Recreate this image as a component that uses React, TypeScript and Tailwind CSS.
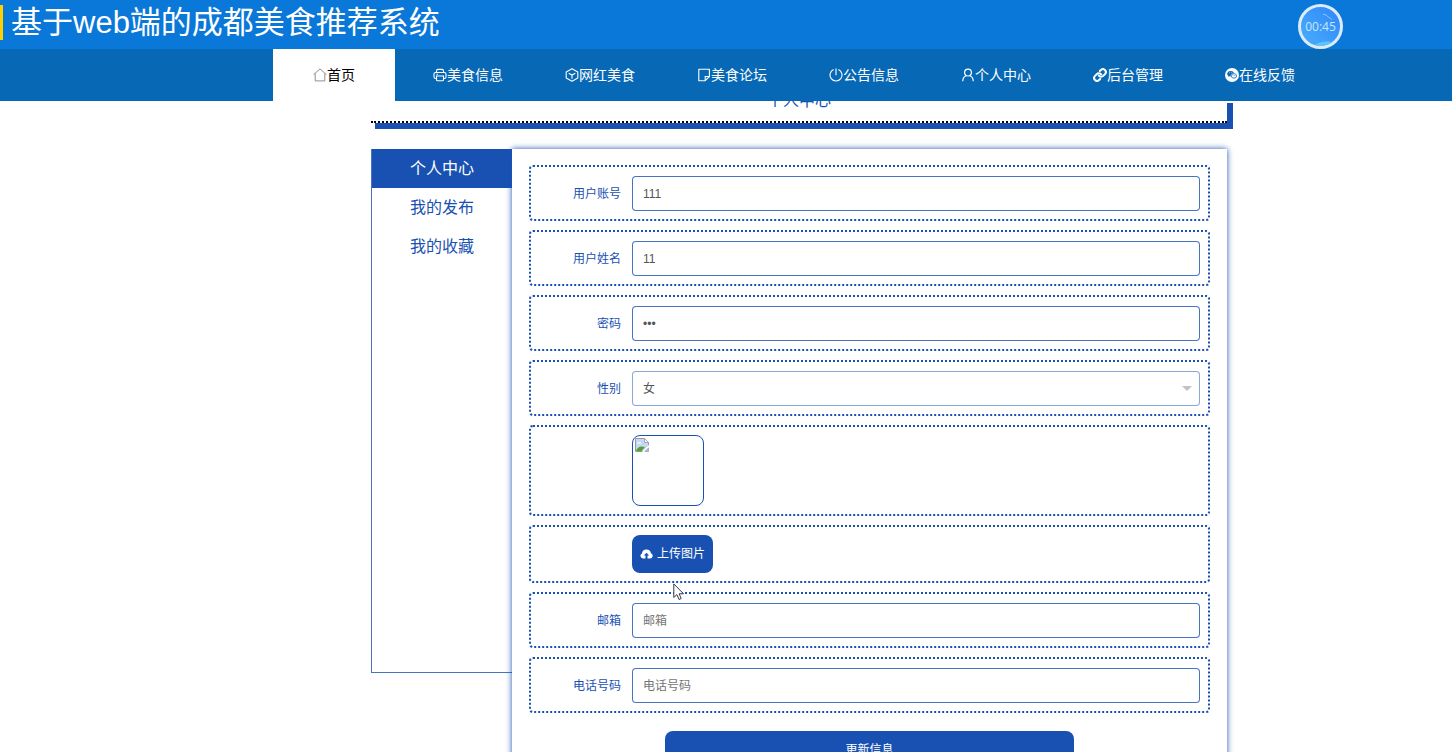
import type { ReactNode } from 'react';
import { Link } from 'lucide-react';

type NavItem = { label: string; icon: ReactNode };

const stroke = {
  viewBox: '0 0 14 14',
  fill: 'none',
  stroke: 'currentColor',
  strokeWidth: 1.1,
  className: 'w-3.5 h-3.5 shrink-0',
} as const;

const HomeIcon = () => (
  <svg {...stroke} strokeWidth={0.8}>
    <path d="M0.6 6.6 7 0.9l6.4 5.7M2.2 5.6v7.3h9.6V5.6" />
  </svg>
);

const PrinterIcon = () => (
  <svg {...stroke}>
    <path d="M3.5 4.5V3a1.6 1.6 0 0 1 1.6-1.6h3.8A1.6 1.6 0 0 1 10.5 3v1.5M3.5 10.5h-.9A1.6 1.6 0 0 1 1 8.900V6.100a1.600 1.600 0 0 1 1.600-1.600h8.800A1.600 1.600 0 0 1 13 6.100v2.800a1.600 1.600 0 0 1-1.600 1.600h-.9" />
    <path d="M3.500 8h7v3.700a1 1 0 0 1-1 1h-5a1 1 0 0 1-1-1zM3.500 6.300h1.500" />
  </svg>
);

const CubeIcon = () => (
  <svg {...stroke}>
    <path d="M7 .8 12.800 3.900v6.200L7 13.200 1.200 10.100V3.900z" strokeLinejoin="round" />
    <path d="M3.700 5.200 7 7.100l3.300-1.900M7 7.100v3.700" />
  </svg>
);

const NoteIcon = () => (
  <svg {...stroke}>
    <path d="M12.400 8.500V1.300H1.800v11.400h6.400z" strokeLinejoin="round" />
    <path d="M8.200 12.700V8.500h4.200" />
  </svg>
);

const PowerIcon = () => (
  <svg {...stroke}>
    <path d="M4.600 1.500a6 6 0 1 0 4.800 0M7 .5v6.800" />
  </svg>
);

const UserIcon = () => (
  <svg {...stroke} strokeWidth={1.200}>
    <circle cx="7" cy="4.600" r="3.400" />
    <path d="M1.700 13.200c.2-3.200 1.700-5 3.700-5.700M12.300 13.200c-.2-3.200-1.700-5-3.700-5.700" />
  </svg>
);

const WechatIcon = () => (
  <svg viewBox="0 0 14 14" className="w-3.5 h-3.5 shrink-0">
    <circle cx="7" cy="7" r="7" fill="currentColor" />
    <path
      d="M5.700 2.900c-2 0-3.500 1.200-3.500 2.800 0 .9.500 1.700 1.300 2.200l-.3 1.100 1.300-.7 1.100.2c-.3-1.900 1.300-3.300 3.400-3.300-.3-1.400-1.700-2.300-3.300-2.300z"
      fill="#0768b5"
    />
    <ellipse cx="8.900" cy="7.900" rx="2.700" ry="2.200" fill="none" stroke="#0768b5" strokeWidth=".8" />
    <path d="M4.300 4.800h.8M6.400 4.800h.8" stroke="#fff" strokeWidth=".8" />
    <path d="M7.700 7.500h.7M9.500 7.500h.7" stroke="#0768b5" strokeWidth=".7" />
  </svg>
);

const UploadIcon = () => (
  <svg viewBox="0 0 13 10" className="w-[13px] h-2.5">
    <path
      d="M3 9.500A2.700 2.700 0 0 1 1.900 4.400 4.600 4.600 0 0 1 11 4.300a2.700 2.700 0 0 1-1 5.200H7.500V6.600h1.600L6.500 3.800 3.900 6.600h1.600v2.900z"
      fill="currentColor"
    />
  </svg>
);

const navItems: NavItem[] = [
  { label: '美食信息', icon: <PrinterIcon /> },
  { label: '网红美食', icon: <CubeIcon /> },
  { label: '美食论坛', icon: <NoteIcon /> },
  { label: '公告信息', icon: <PowerIcon /> },
  { label: '个人中心', icon: <UserIcon /> },
  { label: '后台管理', icon: <Link className="w-3.5 h-3.5 shrink-0" strokeWidth={3.5} /> },
  { label: '在线反馈', icon: <WechatIcon /> },
];

const sideItems = ['个人中心', '我的发布', '我的收藏'];

const inputClass =
  'w-full h-[35px] px-2.5 rounded border border-[#1951b2]/80 bg-white text-xs text-[#555] placeholder:text-[#757575] outline-none';

export default function App() {
  return (
    <div className="relative h-screen overflow-hidden bg-white font-['Liberation_Sans','Noto_Sans_CJK_SC',sans-serif]">
      <Header />
      <main className="pl-[371px] pr-[225px]">
        <div className="-mt-0.5 h-6 flex justify-center border-b-2 border-dotted border-black bg-white shadow-[5px_5px_0_1px_#1951b2]">
          <h2 className="-mt-1.5 text-base leading-4 text-[#1951b2]">个人中心</h2>
        </div>
        <div className="mt-[26px] flex items-start">
          <SideMenu />
          <ProfileForm />
        </div>
      </main>
      <RecordTimer />
    </div>
  );
}

function Header() {
  return (
    <header className="relative z-10 text-white">
      <div className="h-[49px] pt-[5px] bg-[#0a78d8]">
        <h1 className="h-[35px] pl-2 border-l-3 border-[#fdd000] text-[31px] leading-[35px]">
          基于web端的成都美食推荐系统
        </h1>
      </div>
      <nav className="h-[52px] pl-[273px] flex items-center bg-[#0768b5] text-sm whitespace-nowrap">
        <a href="#home" className="h-full px-10 flex items-center bg-white text-black">
          <span className="text-gray-500">
            <HomeIcon />
          </span>
          首页
        </a>
        <div className="ml-[38px] flex items-center gap-[62px]">
          {navItems.map((item) => (
            <a key={item.label} href="#nav" className="flex items-center">
              {item.icon}
              {item.label}
            </a>
          ))}
        </div>
      </nav>
    </header>
  );
}

function SideMenu() {
  return (
    <aside className="w-[141px] h-[524px] shrink-0 border-l border-b border-[#1951b2]/80">
      {sideItems.map((label, i) => (
        <a
          key={label}
          href="#side"
          className={
            i === 0
              ? 'h-[39px] flex items-center justify-center bg-[#1951b2] text-white'
              : 'h-[39px] flex items-center justify-center text-[#1951b2]'
          }
        >
          {label}
        </a>
      ))}
    </aside>
  );
}

function ProfileForm() {
  return (
    <form className="flex-1 px-[17px] pt-4 pb-10 flex flex-col gap-[9px] bg-white shadow-[0_0_6px_#1951b2]">
      <Field id="account" label="用户账号">
        <input id="account" className={inputClass} defaultValue="111" />
      </Field>
      <Field id="name" label="用户姓名">
        <input id="name" className={inputClass} defaultValue="11" />
      </Field>
      <Field id="password" label="密码">
        <input id="password" type="password" className={inputClass} defaultValue="111" />
      </Field>
      <Field id="gender" label="性别">
        <div className="relative">
          <select
            id="gender"
            defaultValue="女"
            className="w-full h-[35px] px-2.5 appearance-none rounded border border-[#1951b2]/50 bg-white text-xs text-[#555] outline-none"
          >
            <option>女</option>
            <option>男</option>
          </select>
          <svg viewBox="0 0 10 5" className="absolute right-2 top-[15px] w-2.5 h-[5px] fill-[#c2c2c2] pointer-events-none">
            <path d="M0 0h10L5 5z" />
          </svg>
        </div>
      </Field>

      {/* Avatar */}
      <div className="pl-[101px] py-2 border-2 border-dotted border-[#1951b2] rounded-sm">
        <BrokenImage />
      </div>

      <div className="relative pl-[101px] py-2 border-2 border-dotted border-[#1951b2] rounded-sm">
        <button
          type="button"
          className="h-[38px] px-2 flex items-center gap-1 rounded-lg bg-[#1951b2] text-xs text-white"
        >
          <UploadIcon />
          上传图片
        </button>
        <Cursor />
      </div>

      <Field id="email" label="邮箱">
        <input id="email" className={inputClass} placeholder="邮箱" />
      </Field>
      <Field id="phone" label="电话号码">
        <input id="phone" className={inputClass} placeholder="电话号码" />
      </Field>
      <button
        type="submit"
        className="mt-[9px] h-[38px] w-3/5 self-center rounded-lg bg-[#1951b2] text-xs text-white"
      >
        更新信息
      </button>
    </form>
  );
}

function Field({ id, label, children }: { id: string; label: string; children: ReactNode }) {
  return (
    <div className="pt-[9px] pb-2 pr-2 flex items-center gap-[11px] border-2 border-dotted border-[#1951b2] rounded-sm">
      <label htmlFor={id} className="w-[90px] shrink-0 text-right text-xs text-[#1951b2]">
        {label}
      </label>
      <div className="flex-1">{children}</div>
    </div>
  );
}

function BrokenImage() {
  return (
    <div className="w-[72px] h-[71px] p-0.5 rounded-lg border border-[#1951b2]">
      <svg viewBox="0 0 14 14" className="w-3.5 h-3.5">
        <path d="M.5.5h9l4 4V9L9 13.500H.5z" fill="#c6d6f3" stroke="#9a9a9a" />
        <path d="M9.500.5v4h4z" fill="#fff" stroke="#9a9a9a" strokeWidth=".8" />
        <path d="M2 5.500c0-1 1-1.500 2-1 1-.8 2.500 0 2.300 1z" fill="#fff" />
        <path d="M1 13c1-3 3-4.500 5.500-4.500L10 9l-3.500 4z" fill="#4fa52f" />
        <path d="m7 14 7-7v2l-5 5z" fill="#fff" />
        <path d="M13.500 10v3.500H10z" fill="#a9c0e8" stroke="#9a9a9a" strokeWidth=".7" />
      </svg>
    </div>
  );
}

function Cursor() {
  return (
    <svg viewBox="0 0 12 18" className="absolute left-[142px] top-14 z-10 w-3 h-[18px]">
      <path
        d="M.8.9v13.600l3.100-2.900 2.100 4.900 2.200-1-2.100-4.700h4.400z"
        fill="#fff"
        stroke="#333a4d"
        strokeWidth="1"
      />
    </svg>
  );
}

function RecordTimer() {
  return (
    <div className="absolute z-20 right-[109px] top-1 w-[45px] h-[45px] flex items-center justify-center overflow-hidden rounded-full border-3 border-[#dcebfa] bg-linear-to-tr from-[#4aaefc] to-[#2f86f8] font-['Open_Sans',sans-serif] text-xs text-[#c5e6fb]">
      <svg viewBox="0 0 39 39" className="absolute inset-0 w-full h-full">
        <path d="M13 39c5-5 12-5 20-4l-4 4z" fill="#5cc6fb" />
        <path d="M22 7l4 1.500M26 9l5 3.500" stroke="#8fc4fd" strokeWidth="1" />
      </svg>
      <span className="relative">00:45</span>
    </div>
  );
}
